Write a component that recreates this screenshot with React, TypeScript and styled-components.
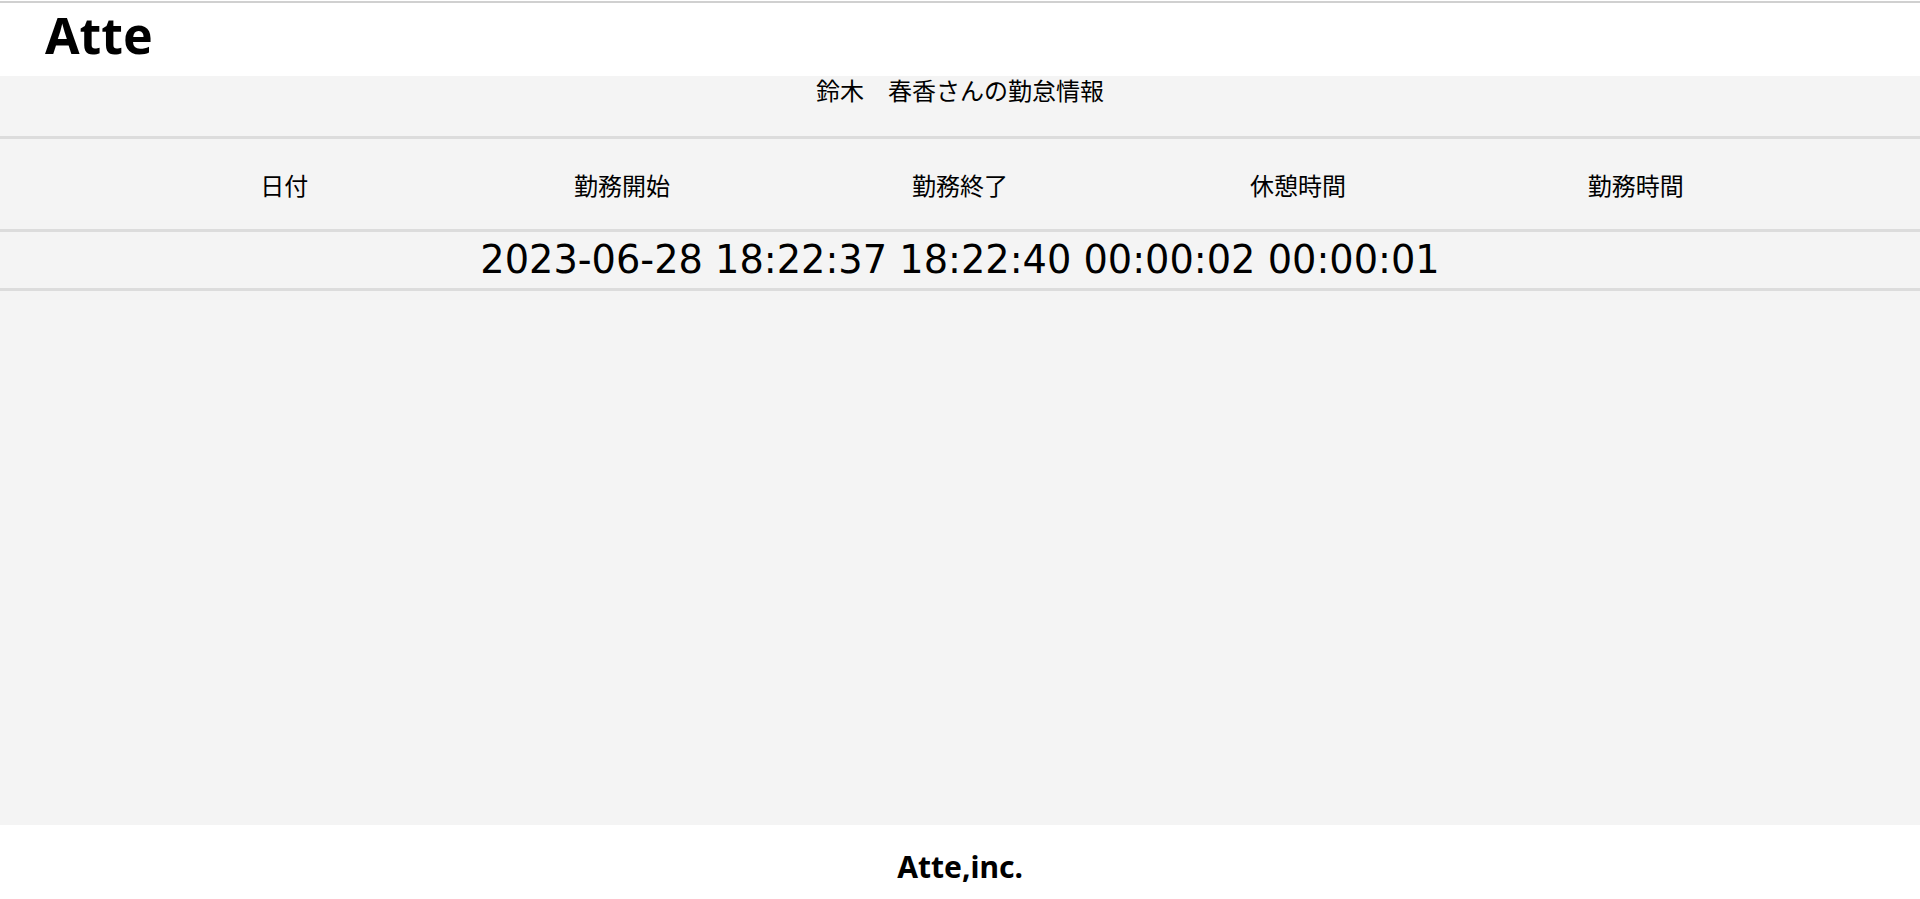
import React from "react";
import styled, { createGlobalStyle } from "styled-components";

const columns = ["日付", "勤務開始", "勤務終了", "休憩時間", "勤務時間"];

const record = {
  date: "2023-06-28",
  start: "18:22:37",
  end: "18:22:40",
  rest: "00:00:02",
  work: "00:00:01",
};

export default function App() {
  return (
    <>
      <GlobalStyle />
      <Page>
        <Header>
          <Logo>Atte</Logo>
        </Header>
        <Main>
          <Title>鈴木　春香さんの勤怠情報</Title>
          <Row height={90}>
            <HeadGrid>
              {columns.map((label) => (
                <HeadCell key={label}>{label}</HeadCell>
              ))}
            </HeadGrid>
          </Row>
          <Row height={56}>
            <DataLine>
              {record.date} {record.start} {record.end} {record.rest} {record.work}
            </DataLine>
          </Row>
        </Main>
        <Footer>
          <Copy>Atte,inc.</Copy>
        </Footer>
      </Page>
    </>
  );
}

const GlobalStyle = createGlobalStyle`
  * {
    box-sizing: border-box;
  }

  body {
    margin: 0;
    background: #fff;
    color: #000;
    font-family: "Noto Sans", "Noto Sans CJK JP", sans-serif;
  }
`;

const Page = styled.div`
  display: flex;
  flex-direction: column;
  min-height: 100vh;
`;

const Header = styled.header`
  display: flex;
  align-items: flex-start;
  height: 75px;
  margin-top: 1px;
  padding: 7px 0 0 45px;
  border-top: 2px solid #d0d0d0;
  background: #fff;
`;

const Logo = styled.h1`
  margin: 0;
  font-family: "Noto Sans", sans-serif;
  font-size: 50px;
  font-weight: 700;
  line-height: 50px;
`;

const Main = styled.main`
  flex: 1;
  background: #f4f4f4;
`;

const Title = styled.div`
  height: 63px;
  border-bottom: 3px solid #dcdcdc;
  font-family: "Noto Sans CJK JP", sans-serif;
  font-size: 24px;
  line-height: 28px;
  text-align: center;
`;

const Row = styled.div<{ height: number }>`
  display: flex;
  align-items: center;
  height: ${(p) => p.height + 3}px;
  border-bottom: 3px solid #dcdcdc;
`;

const HeadGrid = styled.div`
  display: grid;
  grid-template-columns: repeat(5, 1fr);
  width: 88%;
  margin: 0 auto;
  padding-top: 1px;
`;

const HeadCell = styled.div`
  font-family: "Noto Sans CJK JP", sans-serif;
  font-size: 24px;
  text-align: center;
`;

const DataLine = styled.div`
  width: 100%;
  padding-bottom: 2px;
  font-family: "DejaVu Sans", sans-serif;
  font-size: 38.3px;
  text-align: center;
  white-space: nowrap;
`;

const Footer = styled.footer`
  display: flex;
  align-items: center;
  justify-content: center;
  height: 74px;
  padding-top: 8px;
  background: #fff;
`;

const Copy = styled.p`
  margin: 0;
  font-family: "Noto Sans", sans-serif;
  font-size: 30px;
  font-weight: 700;
`;
